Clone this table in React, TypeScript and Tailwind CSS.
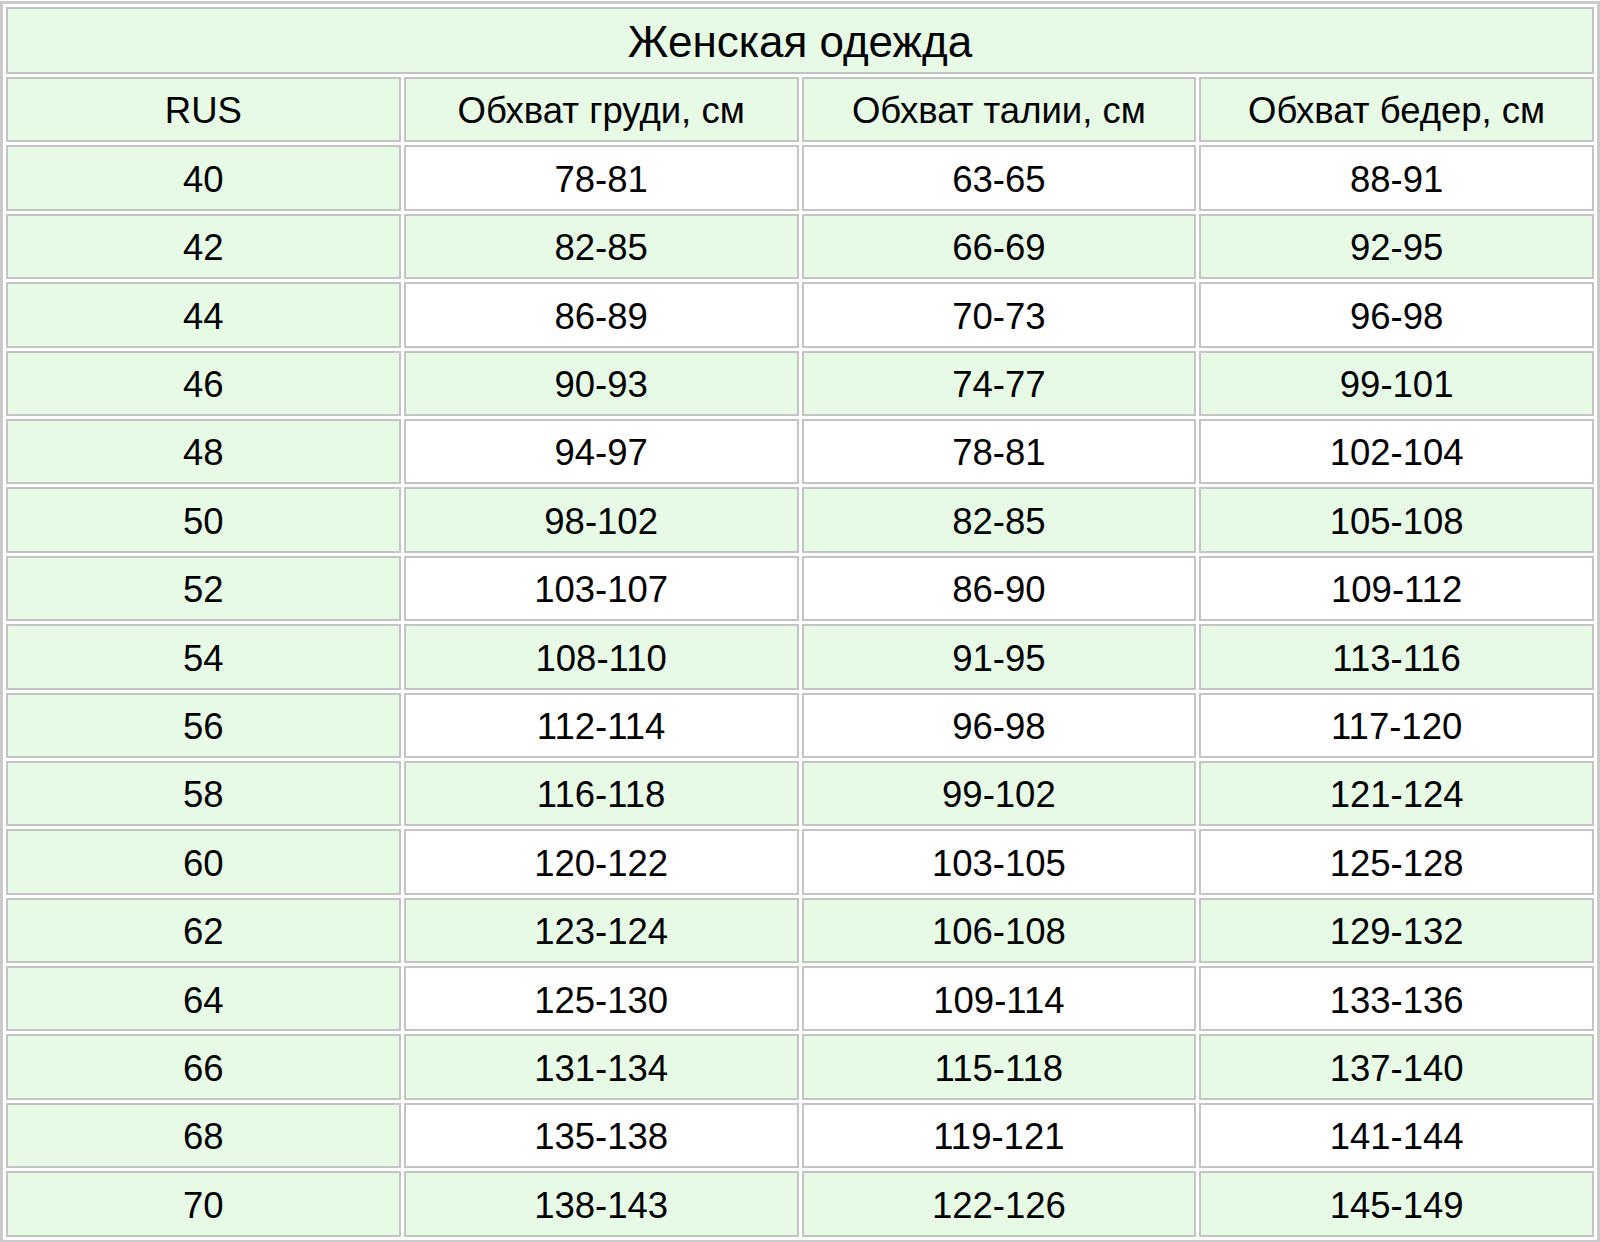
const rows: [string, string, string, string][] = [
  ['40', '78-81', '63-65', '88-91'],
  ['42', '82-85', '66-69', '92-95'],
  ['44', '86-89', '70-73', '96-98'],
  ['46', '90-93', '74-77', '99-101'],
  ['48', '94-97', '78-81', '102-104'],
  ['50', '98-102', '82-85', '105-108'],
  ['52', '103-107', '86-90', '109-112'],
  ['54', '108-110', '91-95', '113-116'],
  ['56', '112-114', '96-98', '117-120'],
  ['58', '116-118', '99-102', '121-124'],
  ['60', '120-122', '103-105', '125-128'],
  ['62', '123-124', '106-108', '129-132'],
  ['64', '125-130', '109-114', '133-136'],
  ['66', '131-134', '115-118', '137-140'],
  ['68', '135-138', '119-121', '141-144'],
  ['70', '138-143', '122-126', '145-149'],
]

const cell = 'h-[65.4px] border-2 border-[#c4c4c4] text-center align-middle px-0 pt-[4px] pb-0 leading-none'

export default function App() {
  return (
    <div className="w-[1600px] h-[1242px] pt-[1px] bg-white font-['Liberation_Sans',Arial,sans-serif] text-black">
      <table className="w-full table-fixed border-separate border-spacing-[3px] border-[3px] border-[#cacaca]">
        <thead>
          <tr>
            <th colSpan={4} className="h-[67px] border-2 border-[#c4c4c4] text-center align-middle px-0 pt-[3px] pb-0 leading-none bg-[#e6fae6] text-[44px] font-normal">
              Женская одежда
            </th>
          </tr>
          <tr className="text-[36.5px]">
            <th className={`${cell} bg-[#e6fae6] font-normal`}>RUS</th>
            <th className={`${cell} bg-[#e6fae6] font-normal`}>Обхват груди, см</th>
            <th className={`${cell} bg-[#e6fae6] font-normal`}>Обхват талии, см</th>
            <th className={`${cell} bg-[#e6fae6] font-normal`}>Обхват бедер, см</th>
          </tr>
        </thead>
        <tbody>
          {rows.map((r, i) => {
            const bg = i % 2 === 0 ? 'bg-white' : 'bg-[#e6fae6]'
            return (
              <tr key={r[0]} className="text-[36.5px]">
                <td className={`${cell} bg-[#e6fae6]`}>{r[0]}</td>
                <td className={`${cell} ${bg}`}>{r[1]}</td>
                <td className={`${cell} ${bg}`}>{r[2]}</td>
                <td className={`${cell} ${bg}`}>{r[3]}</td>
              </tr>
            )
          })}
        </tbody>
      </table>
    </div>
  )
}
